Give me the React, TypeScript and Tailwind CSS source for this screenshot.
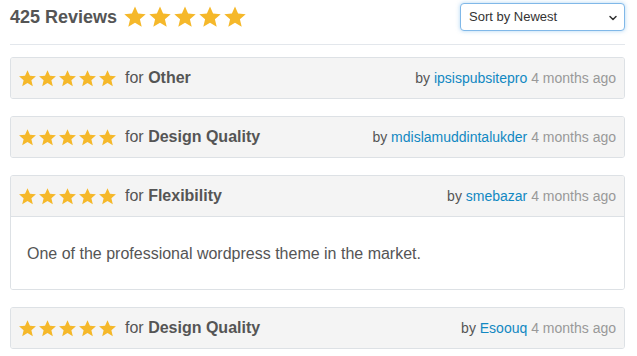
import { ChevronDown } from "lucide-react";

interface Review {
    id: number;
    category: string;
    author: string;
    when: string;
    body?: string;
}

const reviews: Review[] = [
    { id: 1, category: "Other", author: "ipsispubsitepro", when: "4 months ago" },
    { id: 2, category: "Design Quality", author: "mdislamuddintalukder", when: "4 months ago" },
    {
        id: 3,
        category: "Flexibility",
        author: "smebazar",
        when: "4 months ago",
        body: "One of the professional wordpress theme in the market.",
    },
    { id: 4, category: "Design Quality", author: "Esoouq", when: "4 months ago" },
];

function Star({ size }: { size: number }) {
    return (
        <svg width={size} height={size} viewBox="0 0 24 24" className="shrink-0">
            <path
                d="M12 1.5l3.1 7.1 7.6.6-5.8 5 1.8 7.5L12 17.8l-6.7 3.9 1.8-7.5-5.8-5 7.6-.6z"
                fill="#f5b82a"
            />
        </svg>
    );
}

function Stars({ size, gap }: { size: number; gap: string }) {
    return (
        <div className={`flex items-center ${gap}`}>
            {[0, 1, 2, 3, 4].map((i) => (
                <Star key={i} size={size} />
            ))}
        </div>
    );
}

export default function App() {
    return (
        <div className="w-[637px] h-[356px] overflow-hidden bg-white pl-[10px] pr-[12px] pt-[3px] text-[#555] font-['Liberation_Sans',Arial,sans-serif]">
            <div className="flex items-start justify-between h-[28px]">
                <div className="flex items-center gap-[6px] pt-[2px]">
                    <span className="text-[18px] font-bold leading-[22px]">425 Reviews</span>
                    <Stars size={24} gap="gap-[1px]" />
                </div>
                <div className="relative w-[165px] h-[28px] rounded-[4px] border border-[#80b8e8] shadow-[0_0_4px_rgba(102,175,233,0.5)] bg-white flex items-center pl-[8px]">
                    <span className="text-[13px] text-[#333]">Sort by Newest</span>
                    <ChevronDown className="absolute right-[5px] top-[8px] w-[12px] h-[12px] text-[#333]" strokeWidth={3} />
                </div>
            </div>
            <div className="mt-[13px] h-px bg-[#e3e7ec]" />
            <div className="mt-[12px] flex flex-col gap-[17px]">
                {reviews.map((r) => (
                    <div key={r.id} className="rounded-[3px] border border-[#dde1e5] overflow-hidden">
                        <div className="h-[40px] bg-[#f4f4f4] flex items-center justify-between pl-[7px] pr-[8px]">
                            <div className="flex items-center">
                                <Stars size={19} gap="gap-[1px]" />
                                <span className="ml-[8px] text-[16px]">
                                    for <span className="font-bold">{r.category}</span>
                                </span>
                            </div>
                            <div className="text-[14px]">
                                by <span className="text-[#1188c2]">{r.author}</span>{" "}
                                <span className="text-[#999]">{r.when}</span>
                            </div>
                        </div>
                        {r.body && (
                            <div className="border-t border-[#dde1e5] bg-white px-[16px] pt-[27px] pb-[25px] text-[16px] leading-[20px]">
                                {r.body}
                            </div>
                        )}
                    </div>
                ))}
            </div>
        </div>
    );
}
